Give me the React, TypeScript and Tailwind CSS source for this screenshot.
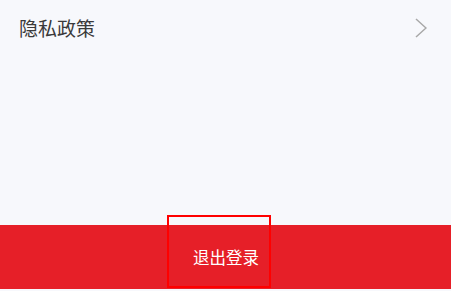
const App = () => {
  return (
    <div
      className="flex h-[291px] w-[451px] flex-col bg-[#f7f8fc]"
      style={{ fontFamily: '"Noto Sans CJK SC", "Noto Sans", sans-serif' }}
    >
      <div className="flex h-[55px] items-center justify-between pl-[19px] pr-[24px]">
        <span className="text-[19px] leading-none text-[#3a3a3a]">隐私政策</span>
        <svg width="12" height="20" viewBox="0 0 12 20" fill="none">
          <path d="M1 1L11 10L1 19" stroke="#a8a8a8" strokeWidth="1.5" strokeLinejoin="miter" />
        </svg>
      </div>

      <div className="flex-1" />

      <div className="relative flex h-[64px] items-center justify-center bg-[#e61f28]">
        <span className="ml-[1px] text-[16.5px] leading-none text-white">退出登录</span>
        <div className="pointer-events-none absolute left-[167px] top-[-10px] h-[73px] w-[104px] border-[2px] border-[#ff0000]" />
      </div>
      <div className="h-[2px] bg-[#f7f8fc]" />
    </div>
  );
};

export default App;
